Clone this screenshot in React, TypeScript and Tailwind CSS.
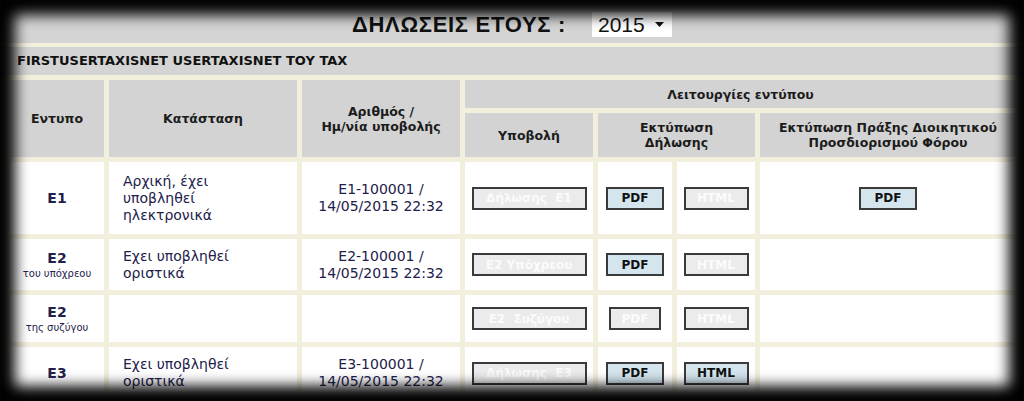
import React from "react";

type Btn = { label: string; on: boolean; w: string };

const btnBase =
  "h-[23px] border-2 border-[#3a3a3a] text-[12px] font-bold leading-none flex items-center justify-center";

function FormButton({ label, on, w }: Btn) {
  return (
    <div
      className={`${btnBase} ${w} ${
        on ? "bg-[#d4e5ee] text-[#111]" : "bg-[#ebebeb] text-[#fbfbfb]"
      }`}
    >
      {label}
    </div>
  );
}

const headCell =
  "bg-[#d3d3d3] flex items-center justify-center text-center text-[12.5px] font-bold leading-[15px] text-[#1c1c1c]";
const bodyCell = "bg-white flex items-center";

interface Row {
  code: string;
  sub?: string;
  status: string[];
  number: string[];
  submit: string;
  pdf: boolean;
  html: boolean;
  act: boolean;
  h: string;
}

const ROWS: Row[] = [
  {
    code: "E1",
    status: ["Αρχική, έχει", "υποβληθεί", "ηλεκτρονικά"],
    number: ["E1-100001 /", "14/05/2015 22:32"],
    submit: "Δήλωσης  E1",
    pdf: true,
    html: false,
    act: true,
    h: "h-[72px]",
  },
  {
    code: "E2",
    sub: "του υπόχρεου",
    status: ["Εχει υποβληθεί", "οριστικά"],
    number: ["E2-100001 /", "14/05/2015 22:32"],
    submit: "Ε2 Υπόχρεου",
    pdf: true,
    html: false,
    act: false,
    h: "h-[51px]",
  },
  {
    code: "E2",
    sub: "της συζύγου",
    status: [],
    number: [],
    submit: "Ε2  Συζύγου",
    pdf: false,
    html: false,
    act: false,
    h: "h-[47px]",
  },
  {
    code: "E3",
    status: ["Εχει υποβληθεί", "οριστικά"],
    number: ["E3-100001 /", "14/05/2015 22:32"],
    submit: "Δήλωσης  E3",
    pdf: true,
    html: true,
    act: false,
    h: "h-[52px]",
  },
];

export default function App() {
  return (
    <div className="relative w-[1024px] h-[401px] overflow-hidden bg-[#f3efdd] font-['DejaVu_Sans',Verdana,sans-serif] text-[#22204a]">
      {/* title bar */}
      <div className="h-[43px] bg-[#d4d4d4] flex items-center justify-center gap-[26px] pt-[6px]">
        <span className="font-['Liberation_Sans',Arial,sans-serif] font-bold text-[22px] tracking-[0.7px] text-[#111]">
          ΔΗΛΩΣΕΙΣ ΕΤΟΥΣ :
        </span>
        <div className="w-[80px] h-[25px] bg-white flex items-center pl-[6px] pr-[8px] justify-between font-['Liberation_Sans',Arial,sans-serif] text-[21px] text-[#111]">
          <span>2015</span>
          <svg width="9" height="5" viewBox="0 0 9 5">
            <path d="M0 0h9L4.5 5z" fill="#111" />
          </svg>
        </div>
      </div>

      {/* user name bar */}
      <div className="mt-[4px] h-[28px] bg-[#d4d4d4] flex items-center pl-[17px] text-[13px] font-bold text-[#111]">
        FIRSTUSERTAXISNET USERTAXISNET TOY TAX
      </div>

      {/* table */}
      <div className="mt-[5px] ml-[10px] w-[1006px] grid grid-cols-[94px_188px_158px_128px_74px_78px_1fr] grid-rows-[28px_44px] gap-x-[5px] gap-y-[5px]">
        <div className={`${headCell} row-span-2`}>Εντυπο</div>
        <div className={`${headCell} row-span-2`}>Κατάσταση</div>
        <div className={`${headCell} row-span-2`}>
          Αριθμός /<br />Ημ/νία υποβολής
        </div>
        <div className={`${headCell} col-span-4`}>Λειτουργίες εντύπου</div>
        <div className={headCell}>Υποβολή</div>
        <div className={`${headCell} col-span-2`}>
          Εκτύπωση
          <br />
          Δήλωσης
        </div>
        <div className={headCell}>
          Εκτύπωση Πράξης Διοικητικού
          <br />
          Προσδιορισμού Φόρου
        </div>

        {ROWS.map((r, i) => (
          <React.Fragment key={i}>
            <div className={`${bodyCell} ${r.h} flex-col justify-center`}>
              <span className="text-[14px] font-bold leading-[17px]">{r.code}</span>
              {r.sub && <span className="text-[10px] leading-[13px]">{r.sub}</span>}
            </div>
            <div className={`${bodyCell} ${r.h} pl-[14px]`}>
              <div className="text-[14px] leading-[17px]">
                {r.status.map((s, j) => (
                  <div key={j}>{s}</div>
                ))}
              </div>
            </div>
            <div className={`${bodyCell} ${r.h} justify-center`}>
              <div className="text-[14px] leading-[17px] text-center">
                {r.number.map((s, j) => (
                  <div key={j}>{s}</div>
                ))}
              </div>
            </div>
            <div className={`${bodyCell} ${r.h} justify-center`}>
              <FormButton label={r.submit} on={false} w="w-[115px] whitespace-pre" />
            </div>
            <div className={`${bodyCell} ${r.h} justify-center`}>
              <FormButton label="PDF" on={r.pdf} w={r.pdf ? "w-[58px]" : "w-[52px]"} />
            </div>
            <div className={`${bodyCell} ${r.h} justify-center`}>
              <FormButton label="HTML" on={r.html} w="w-[65px]" />
            </div>
            <div className={`${bodyCell} ${r.h} justify-center`}>
              {r.act && <FormButton label="PDF" on w="w-[58px]" />}
            </div>
          </React.Fragment>
        ))}
      </div>

      {/* dark vignette frame */}
      <div className="pointer-events-none absolute inset-0 shadow-[inset_0_0_14px_15px_#000]" />
    </div>
  );
}
